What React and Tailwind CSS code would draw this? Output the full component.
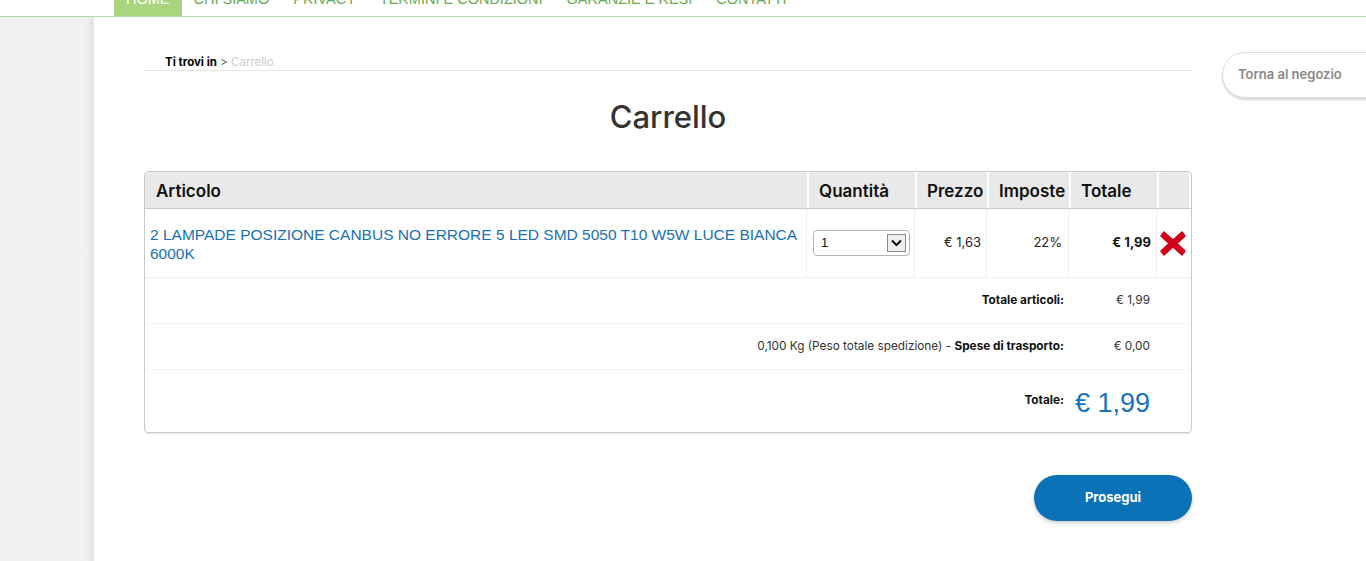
import React from "react";

const navItems = ["HOME", "CHI SIAMO", "PRIVACY", "TERMINI E CONDIZIONI", "GARANZIE E RESI", "CONTATTI"];

const cols = "grid grid-cols-[662px_106px_70px_80px_86px_1fr] gap-x-[2px]";

const RemoveIcon = () => (
    <svg width="26" height="25" viewBox="0 0 26 25">
        <path
            d="M4 1 L13 9 L22 1 L25 5 L17 12.5 L25 20 L22 24 L13 16 L4 24 L1 20 L9 12.5 L1 5 Z"
            fill="#d0021b"
            stroke="#d0021b"
            strokeWidth="1.5"
            strokeLinejoin="round"
        />
    </svg>
);

const App = () => {
    return (
        <div className="w-[1366px] h-[561px] overflow-hidden bg-white relative font-['Inter',sans-serif]">
            {/* Top nav (scrolled, text cut off) */}
            <div className="h-[17px] border-b border-[#b7d8a2] overflow-hidden">
                <div className="flex pl-[114px] -mt-[17px] font-['Liberation_Sans',sans-serif] text-[14.5px]">
                    {navItems.map((item, i) => (
                        <div
                            key={item}
                            className={`h-[33px] leading-[33px] px-[12px] ${
                                i === 0 ? "bg-[#a9d57e] text-white" : "text-[#6aa84f]"
                            }`}
                        >
                            {item}
                        </div>
                    ))}
                </div>
            </div>

            <div className="flex h-[544px]">
                {/* Left gray gutter */}
                <div className="w-[86px] bg-[#f1f1f1]"></div>
                <div className="w-[8px] bg-gradient-to-r from-[#f0f0f0] to-[#e3e3e3]"></div>

                {/* Main content */}
                <div className="flex-1 pl-[50px] pt-[38px]">
                    <div className="w-[1048px]">
                        {/* Breadcrumb */}
                        <div className="border-b border-[#e6e6e6] pl-[21px] pb-[1px] text-[11.5px] leading-[14px]">
                            <span className="font-bold text-black">Ti trovi in</span>
                            <span className="text-[#555]"> &gt; </span>
                            <span className="text-[#cccccc]">Carrello</span>
                        </div>

                        <h1 className="text-center text-[31px] leading-[36px] text-[#333] mt-[28px] font-medium">
                            Carrello
                        </h1>

                        {/* Cart table */}
                        <div className="mt-[36px] border border-[#c9c9c9] rounded-[4px] shadow-[0_1px_1px_rgba(0,0,0,0.08)]">
                            {/* Header */}
                            <div className={`${cols} border-b border-[#c8c8c8] text-[17px] font-semibold text-[#111]`}>
                                <div className="bg-[#e9e9e9] rounded-t-[3px] h-[36px] leading-[39px] pl-[11px]">Articolo</div>
                                <div className="bg-[#e9e9e9] rounded-t-[3px] h-[36px] leading-[39px] pl-[10px]">Quantità</div>
                                <div className="bg-[#e9e9e9] rounded-t-[3px] h-[36px] leading-[39px] pl-[10px]">Prezzo</div>
                                <div className="bg-[#e9e9e9] rounded-t-[3px] h-[36px] leading-[39px] pl-[10px]">Imposte</div>
                                <div className="bg-[#e9e9e9] rounded-t-[3px] h-[36px] leading-[39px] pl-[10px]">Totale</div>
                                <div className="bg-[#e9e9e9] rounded-t-[3px] h-[36px] mr-[2px]"></div>
                            </div>

                            {/* Product row */}
                            <div className={`${cols} border-b border-[#f0f0f0] h-[69px]`}>
                                <div className="border-r border-[#f0f0f0] pl-[5px] pr-[6px] pt-[16px] text-[#1a6fb5] font-['Liberation_Sans',sans-serif] text-[15.5px] leading-[19px]">
                                    2 LAMPADE POSIZIONE CANBUS NO ERRORE 5 LED SMD 5050 T10 W5W LUCE BIANCA 6000K
                                </div>
                                <div className="border-r border-[#f0f0f0] flex items-center pl-[4px]">
                                    <div className="w-[97px] h-[26px] border border-[#b5b5b5] rounded-[4px] flex items-center justify-between pl-[7px] pr-[3px]">
                                        <span className="text-[13px] text-[#111] font-['Liberation_Sans',sans-serif]">1</span>
                                        <div className="w-[19px] h-[18px] border border-[#8a8a8a] bg-[#efefef] flex items-center justify-center">
                                            <svg width="11" height="8" viewBox="0 0 11 8">
                                                <path d="M1 1.5 L5.5 6 L10 1.5" fill="none" stroke="#111" strokeWidth="2" />
                                            </svg>
                                        </div>
                                    </div>
                                </div>
                                <div className="border-r border-[#f0f0f0] flex items-center justify-end pr-[5px] text-[13px] text-[#222]">
                                    € 1,63
                                </div>
                                <div className="border-r border-[#f0f0f0] flex items-center justify-end pr-[6px] text-[13px] text-[#222]">
                                    22%
                                </div>
                                <div className="border-r border-[#f0f0f0] flex items-center justify-end pr-[5px] text-[13px] font-bold text-[#111]">
                                    € 1,99
                                </div>
                                <div className="flex items-center pl-[1px]">
                                    <RemoveIcon />
                                </div>
                            </div>

                            {/* Totale articoli */}
                            <div className={`${cols} border-b border-[#f3f3f3] h-[46px] items-center text-[11.8px]`}>
                                <div className="col-span-4 text-right pr-[5px] font-bold text-[#111]">Totale articoli:</div>
                                <div className="text-right pr-[7px] text-[#333]">€ 1,99</div>
                            </div>

                            {/* Spedizione */}
                            <div className={`${cols} border-b border-[#f3f3f3] h-[46px] items-center text-[11.8px]`}>
                                <div className="col-span-4 text-right pr-[5px] text-[#333]">
                                    0,100 Kg (Peso totale spedizione) - <span className="font-bold text-[#111]">Spese di trasporto:</span>
                                </div>
                                <div className="text-right pr-[7px] text-[#333]">€ 0,00</div>
                            </div>

                            {/* Totale */}
                            <div className={`${cols} h-[62px] items-center`}>
                                <div className="col-span-4 text-right pr-[5px] text-[11.8px] font-bold text-[#111]">Totale:</div>
                                <div className="text-right pr-[7px] pt-[4px] text-[27px] text-[#1a72b8] font-['Liberation_Sans',sans-serif]">
                                    € 1,99
                                </div>
                            </div>
                        </div>

                        {/* Prosegui */}
                        <div className="flex justify-end mt-[42px]">
                            <button className="w-[158px] h-[46px] rounded-full bg-[#0b72b7] text-white text-[13px] font-bold shadow-[0_2px_4px_rgba(0,0,0,0.2)]">
                                Prosegui
                            </button>
                        </div>
                    </div>
                </div>
            </div>

            {/* Torna al negozio tab */}
            <div className="absolute left-[1222px] top-[52px] w-[160px] h-[46px] border border-[#dddddd] rounded-l-[24px] bg-white shadow-[0_2px_2px_rgba(0,0,0,0.15)] flex items-center pl-[15px] text-[13px] font-semibold text-[#888]">
                Torna al negozio
            </div>
        </div>
    );
};

export default App;
